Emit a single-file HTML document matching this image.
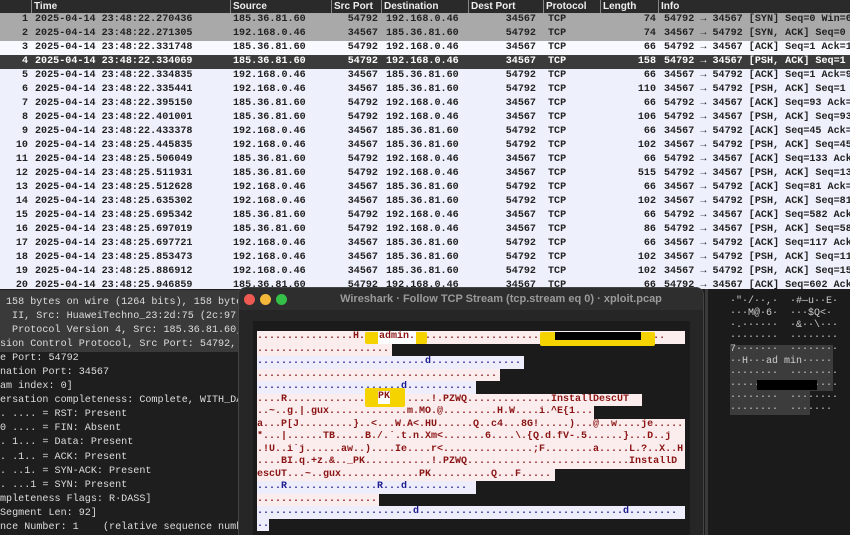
<!DOCTYPE html>
<html><head><meta charset="utf-8"><style>
*{margin:0;padding:0;box-sizing:border-box}
html,body{width:850px;height:535px;overflow:hidden}
body{background:#1b1b1b;position:relative;font-family:"Liberation Mono",monospace}
.top{position:absolute;left:0;top:0;width:850px;height:289px;background:#eef0fb;overflow:hidden}
.hdr{position:absolute;left:0;top:0;width:850px;height:13px;background:#2a2a2a;color:#eee;font:bold 10px "Liberation Sans",sans-serif}
.hdr span{position:absolute;top:0;line-height:13px;border-left:1px solid #888;padding-left:2px}
.row{position:absolute;left:0;width:850px;height:14px;font-size:10.1px;font-weight:bold;color:#222;line-height:14px;white-space:pre}
.row span{position:absolute;top:0}
.r{text-align:right}
.det{position:absolute;left:0;top:289px;width:240px;height:246px;background:#1e1e1e;color:#ddd;font-size:10.1px;line-height:14.06px;white-space:pre;overflow:hidden}
.det .hl{position:absolute;left:0;top:1px;width:240px;height:62px;background:#3a3a3a}
.det .tx{position:absolute;left:6px;top:7px}
.win{position:absolute;left:238px;top:287px;width:466px;height:260px;background:#262626;border-radius:8px 8px 0 0;border:1px solid #444}
.tb{position:absolute;left:0;top:0;width:100%;height:22px;background:#2e2e2e;border-radius:8px 8px 0 0;color:#9a9a9a;font:bold 11px "Liberation Sans",sans-serif;text-align:center;line-height:22px;padding-left:60px}
.dot{position:absolute;top:6px;width:11px;height:11px;border-radius:50%}
.frame{position:absolute;left:14px;top:33px;width:437px;height:230px;background:#1b1b1b}
.pan{position:absolute;left:257px;top:331px;font-size:10px;line-height:12.5px;font-weight:bold}
.pan div{height:12.5px;overflow:hidden;white-space:pre}
.c{background:#fbeded;color:#8b1515}
.s{background:#ededfb;color:#1c1c90}
.y{position:absolute;background:#f5d300;border-radius:2px}
.w{position:absolute;font-size:10px;font-weight:bold;color:#8b1515;line-height:12.5px;background:#fff}
.rp{position:absolute;left:705px;top:289px;width:145px;height:246px;background:#1b1b1b;border-left:3px solid #3a3a3a;color:#ccc;font-size:10px;line-height:12px;white-space:pre}
</style></head><body>
<div class="top">
<div class="hdr"><span style="left:31px">Time</span><span style="left:230px">Source</span><span style="left:331px">Src Port</span><span style="left:381px">Destination</span><span style="left:468px">Dest Port</span><span style="left:543px">Protocol</span><span style="left:600px">Length</span><span style="left:658px">Info</span></div>
<div id="rows"></div>
</div>
<div class="det"><div class="hl"></div><div class="tx" style="left:6px">158 bytes on wire (1264 bits), 158 bytes captured
 II, Src: HuaweiTechno_23:2d:75 (2c:97:b1
 Protocol Version 4, Src: 185.36.81.60,
</div><div class="tx" style="left:0;top:49px">sion Control Protocol, Src Port: 54792,
e Port: 54792
nation Port: 34567
am index: 0]
ersation completeness: Complete, WITH_DATA
. .... = RST: Present
0 .... = FIN: Absent
. 1... = Data: Present
. .1.. = ACK: Present
. ..1. = SYN-ACK: Present
. ...1 = SYN: Present
mpleteness Flags: R·DASS]
Segment Len: 92]
nce Number: 1    (relative sequence number)</div></div>
<div class="win"><div class="tb">Wireshark · Follow TCP Stream (tcp.stream eq 0) · xploit.pcap</div>
<div class="dot" style="left:5px;background:#ee5a52"></div><div class="dot" style="left:21px;background:#f4b83a"></div><div class="dot" style="left:37px;background:#34c048"></div>
<div class="frame"></div></div>
<div class="pan"><div class="c" style="width:428px">................H...admin...........................................</div><div class="c" style="width:135px">......................</div><div class="s" style="width:267px">............................d...............</div><div class="c" style="width:243px">........................................</div><div class="s" style="width:219px">........................d...........</div><div class="c" style="width:385px">....R.............. PK ......!.PZWQ..............InstallDescUT</div><div class="c" style="width:337px">..~..g.|.gux.............m.MO.@.........H.W....i.^E{1...</div><div class="c" style="width:428px">a...P[J.........}..&lt;...W.A&lt;.HU......Q..c4...8G!.....)...@..w....je.....</div><div class="c" style="width:428px">*...|......TB.....B./.`.t.n.Xm&lt;.......6....\.{Q.d.fV-.5......}...D..j</div><div class="c" style="width:428px">.!U..i`j......aw..)....Ie....r&lt;...............;F........a.....L.?..X..H</div><div class="c" style="width:428px">....BI.q.+z.&amp;.._PK...........!.PZWQ...........................InstallD</div><div class="c" style="width:298px">escUT...~..gux.............PK..........Q...F.....</div><div class="s" style="width:219px">....R...............R...d..........</div><div class="c" style="width:122px">....................</div><div class="s" style="width:428px">..........................d..................................d........</div><div class="s" style="width:12px">..</div></div>
<div class="y" style="left:365px;top:332px;width:62px;height:12px"></div>
<div class="w" style="left:378px;top:331px;padding:0 1px">admin.</div>
<div class="y" style="left:540px;top:332px;width:115px;height:14px"></div>
<div style="position:absolute;left:555px;top:332px;width:86px;height:8px;background:#000"></div>
<div class="y" style="left:365px;top:388px;width:40px;height:19px"></div>
<div class="w" style="left:378px;top:391px">PK</div>
<div class="rp"><div style="position:absolute;left:22px;top:56px;width:103px;height:46px;background:#3c3c3c"></div><div style="position:absolute;left:22px;top:100px;width:80px;height:26px;background:#3c3c3c"></div><div style="position:absolute;left:22px;top:7px">·"·/··,·  ·#—u··E·
···M@·6·  ···$Q&lt;·
·.······  ·&amp;··\···
········  ········
7·······  ········
··H···ad min·····
········  ········
········  ········
········  ········
········  ·······</div><div style="position:absolute;left:49px;top:91px;width:60px;height:10px;background:#000"></div></div>
<script>
var d=[
[1,"2025-04-14 23:48:22.270436","185.36.81.60","54792","192.168.0.46","34567","74","54792 → 34567 [SYN] Seq=0 Win=64240"],
[2,"2025-04-14 23:48:22.271305","192.168.0.46","34567","185.36.81.60","54792","74","34567 → 54792 [SYN, ACK] Seq=0 Ack"],
[3,"2025-04-14 23:48:22.331748","185.36.81.60","54792","192.168.0.46","34567","66","54792 → 34567 [ACK] Seq=1 Ack=1 Wi"],
[4,"2025-04-14 23:48:22.334069","185.36.81.60","54792","192.168.0.46","34567","158","54792 → 34567 [PSH, ACK] Seq=1 Ac"],
[5,"2025-04-14 23:48:22.334835","192.168.0.46","34567","185.36.81.60","54792","66","34567 → 54792 [ACK] Seq=1 Ack=93 W"],
[6,"2025-04-14 23:48:22.335441","192.168.0.46","34567","185.36.81.60","54792","110","34567 → 54792 [PSH, ACK] Seq=1 Ac"],
[7,"2025-04-14 23:48:22.395150","185.36.81.60","54792","192.168.0.46","34567","66","54792 → 34567 [ACK] Seq=93 Ack=45"],
[8,"2025-04-14 23:48:22.401001","185.36.81.60","54792","192.168.0.46","34567","106","54792 → 34567 [PSH, ACK] Seq=93 A"],
[9,"2025-04-14 23:48:22.433378","192.168.0.46","34567","185.36.81.60","54792","66","34567 → 54792 [ACK] Seq=45 Ack=13"],
[10,"2025-04-14 23:48:25.445835","192.168.0.46","34567","185.36.81.60","54792","102","34567 → 54792 [PSH, ACK] Seq=45 A"],
[11,"2025-04-14 23:48:25.506049","185.36.81.60","54792","192.168.0.46","34567","66","54792 → 34567 [ACK] Seq=133 Ack="],
[12,"2025-04-14 23:48:25.511931","185.36.81.60","54792","192.168.0.46","34567","515","54792 → 34567 [PSH, ACK] Seq=133"],
[13,"2025-04-14 23:48:25.512628","192.168.0.46","34567","185.36.81.60","54792","66","34567 → 54792 [ACK] Seq=81 Ack=5"],
[14,"2025-04-14 23:48:25.635302","192.168.0.46","34567","185.36.81.60","54792","102","34567 → 54792 [PSH, ACK] Seq=81 A"],
[15,"2025-04-14 23:48:25.695342","185.36.81.60","54792","192.168.0.46","34567","66","54792 → 34567 [ACK] Seq=582 Ack="],
[16,"2025-04-14 23:48:25.697019","185.36.81.60","54792","192.168.0.46","34567","86","54792 → 34567 [PSH, ACK] Seq=582"],
[17,"2025-04-14 23:48:25.697721","192.168.0.46","34567","185.36.81.60","54792","66","34567 → 54792 [ACK] Seq=117 Ack="],
[18,"2025-04-14 23:48:25.853473","192.168.0.46","34567","185.36.81.60","54792","102","34567 → 54792 [PSH, ACK] Seq=117"],
[19,"2025-04-14 23:48:25.886912","192.168.0.46","34567","185.36.81.60","54792","102","34567 → 54792 [PSH, ACK] Seq=153"],
[20,"2025-04-14 23:48:25.946859","185.36.81.60","54792","192.168.0.46","34567","66","54792 → 34567 [ACK] Seq=602 Ack="]];
var h="";
d.forEach(function(r,i){
var bg=i<2?"#a9a9a9":(i==3?"#3b3b3b":(i==2?"#f8f8ff":"transparent"));
var col=i==3?"#fff":"#222";
var t=13+14*i;
h+='<div class="row" style="top:'+t+'px;background:'+bg+';color:'+col+'">'+
'<span class="r" style="left:0;width:28px">'+r[0]+'</span>'+
'<span style="left:35px">'+r[1]+'</span>'+
'<span style="left:233px">'+r[2]+'</span>'+
'<span class="r" style="left:330px;width:48px">'+r[3]+'</span>'+
'<span style="left:386px">'+r[4]+'</span>'+
'<span class="r" style="left:480px;width:56px">'+r[5]+'</span>'+
'<span style="left:548px">TCP</span>'+
'<span class="r" style="left:600px;width:56px">'+r[6]+'</span>'+
'<span style="left:664px">'+r[7]+'</span></div>';});
document.getElementById("rows").innerHTML=h;
</script>
</body></html>
